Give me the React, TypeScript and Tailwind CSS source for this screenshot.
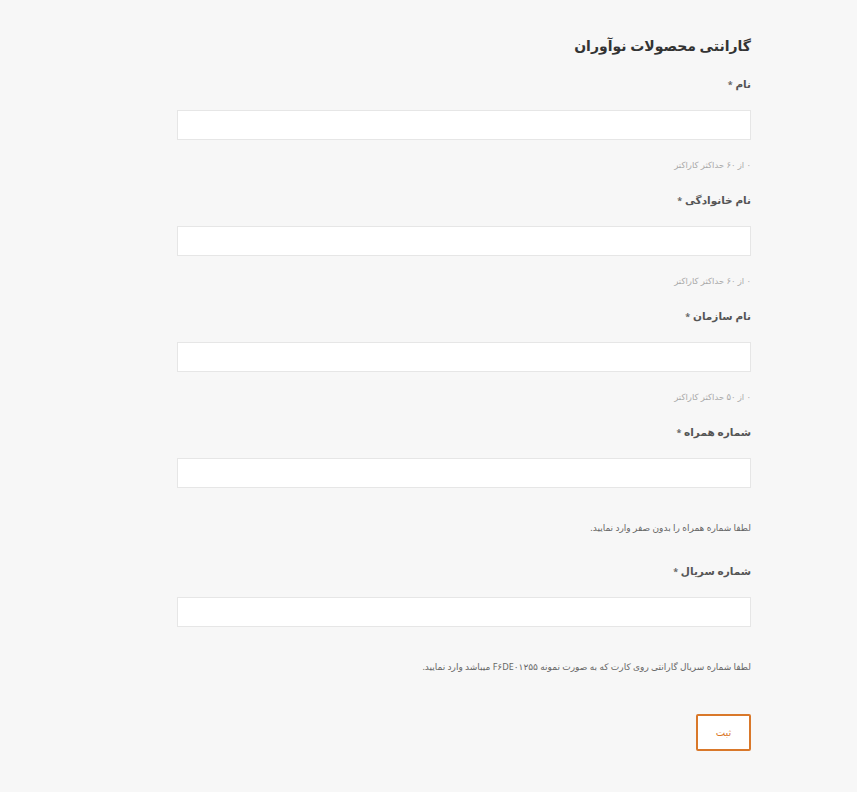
import React from 'react';

interface Field {
  label: string;
  hint: string;
  hintDark?: boolean;
}

const fields: Field[] = [
  { label: 'نام', hint: '۰ از ۶۰ حداکثر کاراکتر' },
  { label: 'نام خانوادگی', hint: '۰ از ۶۰ حداکثر کاراکتر' },
  { label: 'نام سازمان', hint: '۰ از ۵۰ حداکثر کاراکتر' },
  { label: 'شماره همراه', hint: 'لطفا شماره همراه را بدون صفر وارد نمایید.', hintDark: true },
  {
    label: 'شماره سریال',
    hint: 'لطفا شماره سریال گارانتی روی کارت که به صورت نمونه F۶DE۰۱۲۵۵ میباشد وارد نمایید.',
    hintDark: true,
  },
];

const FormField: React.FC<{ field: Field }> = ({ field }) => (
  <div className="flex flex-col">
    <label className="text-[10.5px] font-bold text-[#555] leading-[16px]">
      {field.label} <span className="text-[9px] text-[#666]">*</span>
    </label>
    <input className="mt-[17px] h-[30px] w-full bg-white border border-[#e6e6e6] outline-none" />
    {field.hintDark ? (
      <p className="mt-[33px] text-[9px] leading-[14px] text-[#666]">{field.hint}</p>
    ) : (
      <p className="mt-[18px] text-[8.5px] leading-[14px] text-[#aaa]">{field.hint}</p>
    )}
  </div>
);

const App: React.FC = () => {
  return (
    <div
      dir="rtl"
      className="min-h-[792px] w-full bg-[#f7f7f7]"
      style={{ fontFamily: '"Noto Sans", "DejaVu Sans", sans-serif' }}
    >
      <div className="ml-[177px] mr-[106px] pt-[33px]">
        <h1 className="text-[14px] font-bold text-[#333] leading-[26px]">گارانتی محصولات نوآوران</h1>
        <div className="mt-[17px] flex flex-col gap-[20px]">
          <FormField field={fields[0]} />
          <FormField field={fields[1]} />
          <FormField field={fields[2]} />
          <div className="flex flex-col gap-[28px]">
            <FormField field={fields[3]} />
            <FormField field={fields[4]} />
          </div>
        </div>
        <div className="mt-[40px] flex">
          <button className="w-[55px] h-[37px] border-2 border-[#d9782a] bg-white text-[10px] text-[#d9782a] rounded-[2px]">
            ثبت
          </button>
        </div>
      </div>
    </div>
  );
};

export default App;
